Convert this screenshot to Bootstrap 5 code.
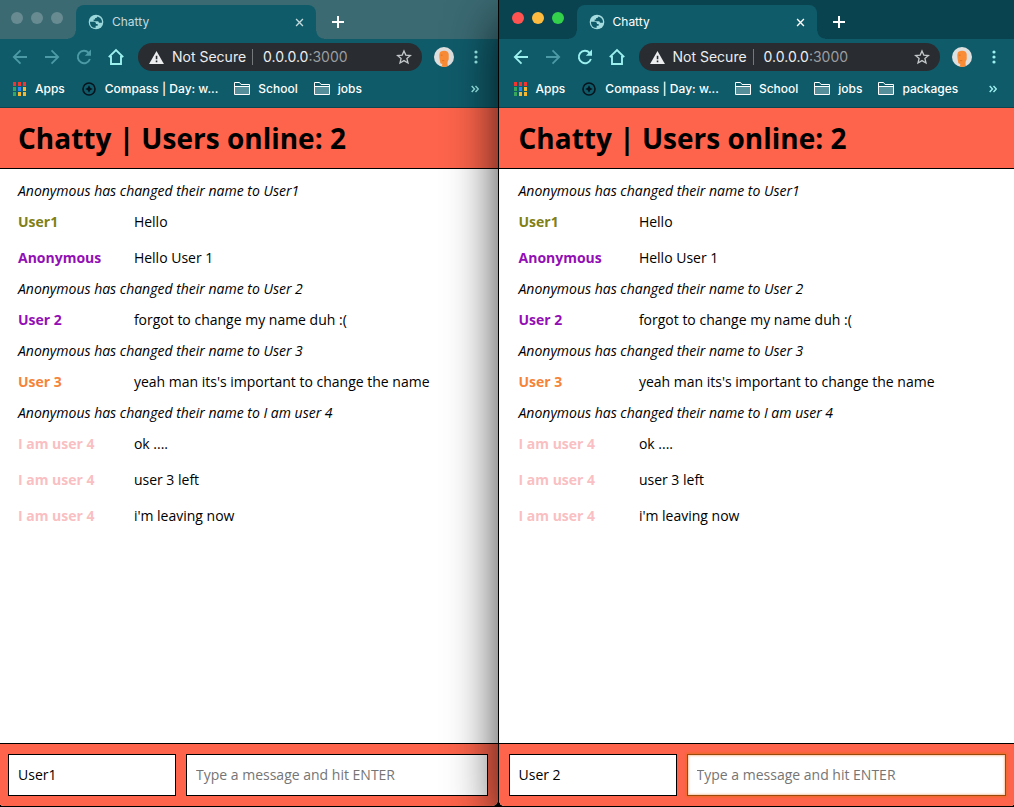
<!DOCTYPE html>
<html lang="en">
<head>
<meta charset="utf-8">
<meta name="viewport" content="width=device-width, initial-scale=1">
<title>Chatty</title>
<link href="https://cdn.jsdelivr.net/npm/bootstrap@5.3.0/dist/css/bootstrap.min.css" rel="stylesheet">
<style>
  body { background: #000; font-family: "Open Sans", sans-serif; font-size: 14px; line-height: 20px; color: #000; overflow: hidden; }
  .desktop { height: 100vh; margin: 0 -2px; padding-bottom: 1px; }

  /* browser window */
  .window { min-width: 0; overflow: hidden; border-radius: 0 0 6px 6px; }
  .window-back { flex: 500 1 0; --strip: #3b6a73; --nav-icon: #4b9aa5; --tab-text: #c3dadd; --tab-icon: #9ad7da; }
  .window-front { flex: 518 1 0; border-left: 1px solid #000; position: relative; z-index: 1; box-shadow: 0 20px 50px rgba(0,0,0,.75);
    --strip: #09434f; --nav-icon: #9cf0ee; --tab-text: #fff; --tab-icon: #a5dcdf; }
  .chrome { background: #105b6a; color: #fff; font-family: Inter, sans-serif; font-size: 12px; line-height: 16px; border-bottom: 1px solid #0c4450; }
  .chrome button { background: none; border: 0; padding: 0; color: inherit; }
  .chrome svg { display: block; flex: none; }

  .tab-strip { background: var(--strip); height: 39px; padding-left: 13px; }
  .lights { width: 65px; height: 36px; gap: 8px; }
  .light { width: 12px; height: 12px; border-radius: 50%; background: #688b92; }
  .window-front .light-close { background: #ff5351; }
  .window-front .light-min { background: #fdbc40; }
  .window-front .light-max { background: #33d04b; }
  .tab-active { position: relative; width: 240px; height: 34px; background: #105b6a; border-radius: 8px 8px 0 0; padding: 0 8px 0 12px; color: var(--tab-text); }
  .tab-active::before, .tab-active::after { content: ""; position: absolute; bottom: 0; width: 8px; height: 8px; }
  .tab-active::before { right: 100%; background: radial-gradient(circle at 0 0, transparent 7px, #105b6a 8px); }
  .tab-active::after { left: 100%; background: radial-gradient(circle at 100% 0, transparent 7px, #105b6a 8px); }
  .globe { color: var(--tab-icon); }
  .new-tab { width: 24px; margin: 4px 0 0 10px; }

  .toolbar { height: 36px; padding: 0 6px; }
  .chrome .nav-btn { width: 32px; height: 32px; color: var(--nav-icon); }
  .chrome .nav-dim { color: #4b9aa5; }
  .chrome .nav-home, .chrome .nav-mint { color: #9cf0ee; }
  .omnibox { height: 28px; margin: 0 12px 0 6px; padding: 0 10px 0 11px; border-radius: 14px; background: #292c30; color: #eceef0; font-size: 14px; line-height: 20px; }
  .omni-rule { width: 1px; height: 16px; background: #76797c; margin: 0 10px 0 6px; }
  .omnibox .star { color: #c5c8ca; }
  .port { color: #9b9ea1; }
  .avatar-btn { margin-right: 6px; }

  .bookmarks { height: 32px; padding: 0 19px 4px 13px; gap: 16px; font-weight: 500; }
  .bookmarks a { color: #fff; text-decoration: none; gap: 8px; white-space: nowrap; }

  /* chat page */
  .chat { background: #fff; }
  .chat-head { background: #fd644b; border-bottom: 1px solid #000; padding: 10px 20px; }
  .chat-head h1 { font-size: 28px; line-height: 40px; font-weight: 700; }
  .feed { padding: 9px 16px 0 20px; }
  .notice { line-height: 20px; padding: 3px 0; font-style: italic; }
  .message { line-height: 20px; padding: 8px 0; }
  .author { font-weight: 700; }
  .olive { color: #808015; }
  .violet { color: #930fb5; }
  .orange { color: #f58439; }
  .pink { color: #f9bfc2; }
  .chat-foot { background: #fd644b; border-top: 1px solid #000; padding: 10px; gap: 10px; }
  .field { height: 42px; padding: 0 9px 2px; border: 1px solid #000; border-radius: 0; background: #fff; color: #000; font-size: 14px; min-width: 0; outline: 0; }
  .field::placeholder { color: #757575; opacity: 1; }
  .field-name { width: 168px; flex: none; }
  .field-active { border-color: #974a0c; box-shadow: 0 0 2px 1px #ec6a25, inset 0 0 2px 1px #f8c9ac; }
</style>
</head>
<body>

<svg class="d-none" xmlns="http://www.w3.org/2000/svg">
  <symbol id="i-globe" viewBox="0 0 24 24"><circle cx="12" cy="12" r="11" fill="currentColor"/><path fill="#105b6a" d="M3 11.500h5.500c2.200 0 3.500 1.200 3.500 3.500h2.500v2.500h-3v3.300C6 21 2.800 17 3 11.500zM14 3.600c-.2 1.800-1.300 2.300-3.300 2.300v2.400H8.500v2.400h5.700c1.500 0 2.200 1 2.200 2.400h4.500c.8-4.300-2.200-8.300-6.900-9.500z"/></symbol>
  <symbol id="i-close" viewBox="0 0 10 10"><path d="M1.200 1.200l7.600 7.600M8.800 1.200L1.200 8.800" stroke="currentColor" stroke-width="1.500" fill="none"/></symbol>
  <symbol id="i-plus" viewBox="0 0 12 12"><path d="M6 0v12M0 6h12" stroke="currentColor" stroke-width="2" fill="none"/></symbol>
  <symbol id="i-back" viewBox="0 0 16 16"><path d="M15 8H2M8.500 1.300L1.800 8l6.700 6.700" stroke="currentColor" stroke-width="1.800" fill="none"/></symbol>
  <symbol id="i-forward" viewBox="0 0 16 16"><path d="M1 8h13M7.500 1.300L14.200 8l-6.700 6.700" stroke="currentColor" stroke-width="1.800" fill="none"/></symbol>
  <symbol id="i-reload" viewBox="0 0 16 16"><path d="M13.900 10A6.200 6.200 0 1 1 12.600 3.800" stroke="currentColor" stroke-width="1.900" fill="none"/><path d="M15 .6v6.200H8.800z" fill="currentColor"/></symbol>
  <symbol id="i-home" viewBox="0 0 18 18"><path d="M1.800 9.200L9 2l7.200 7.200M4 8v8h10V8" stroke="currentColor" stroke-width="1.900" fill="none"/></symbol>
  <symbol id="i-warn" viewBox="0 0 16 14"><path d="M8 0l8 14H0z" fill="currentColor"/><path d="M7.200 5h1.700v4H7.200zM7.200 10.300h1.700V12H7.200z" fill="#292c30"/></symbol>
  <symbol id="i-star" viewBox="0 0 16 16"><path d="M8 1.900l1.800 4.200 4.600.4-3.500 3 1.100 4.500L8 11.600 4 14l1.100-4.500-3.500-3 4.600-.4z" stroke="currentColor" stroke-width="1.300" fill="none"/></symbol>
  <symbol id="i-avatar" viewBox="0 0 20 20"><circle cx="10" cy="10" r="10" fill="#dedfdf"/><path fill="#f98c35" d="M5.500 7c0-2.200 2-3.200 4.800-3.200 2.700 0 4.400 1.400 4.400 3.700v4.300c0 1.500-.9 2.200-1.100 3.200-.2 1.300 0 3 .3 4.100a10 10 0 0 1-6.700.5c.8-.8 1.300-2 .9-2.900-1.300.1-2-.4-1.900-1.700C5.800 13 5 9.300 5.500 7z"/><path d="M6.800 8.200h1.800M8 13.600h2.200" stroke="#d96f22" stroke-width=".8"/></symbol>
  <symbol id="i-dots" viewBox="0 0 4 14"><g fill="currentColor"><circle cx="2" cy="2" r="1.600"/><circle cx="2" cy="7" r="1.600"/><circle cx="2" cy="12" r="1.600"/></g></symbol>
  <symbol id="i-apps" viewBox="0 0 16 16"><path fill="#f4342f" d="M2 1h3v4H2zM7 1h3v4H7zM12 1h3v4h-3z"/><path fill="#36a65d" d="M2 6h3v4H2zM2 11h3v4H2z"/><path fill="#2f87f2" d="M7 6h3v4H7z"/><path fill="#f5b82e" d="M12 6h3v4h-3zM7 11h3v4H7zM12 11h3v4h-3z"/></symbol>
  <symbol id="i-compass" viewBox="0 0 16 16"><circle cx="8" cy="8" r="6" fill="none" stroke="#06151d" stroke-width="1.600"/><path d="M8 4.300l1.300 2.400L11.700 8 9.300 9.300 8 11.700 6.700 9.300 4.300 8l2.400-1.300z" fill="#06151d"/></symbol>
  <symbol id="i-folder" viewBox="0 0 16 16"><path d="M.5 13.500v-12h5l1.500 2h8.500v10z" fill="#105b6a" stroke="#fff"/><path d="M1 6h14v7H1z" fill="#568f99"/><path d="M.5 5.500h15" stroke="#fff"/></symbol>
  <symbol id="i-more" viewBox="0 0 8 8"><path d="M.7 1L3.500 4 .7 7M4.500 1l2.800 3-2.800 3" stroke="currentColor" stroke-width="1.400" fill="none"/></symbol>
</svg>

<main class="desktop d-flex">

  <section class="window window-back d-flex flex-column" aria-label="User1 window">
    <div class="chrome">
      <div class="tab-strip d-flex">
        <div class="lights d-flex align-items-center flex-shrink-0"><span class="light light-close"></span><span class="light light-min"></span><span class="light light-max"></span></div>
        <div class="tab-active d-flex align-items-center align-self-end">
          <svg class="globe" width="16" height="16"><use href="#i-globe"/></svg>
          <span class="flex-grow-1 ps-2">Chatty</span>
          <button type="button" aria-label="Close tab" class="px-1"><svg width="9" height="9"><use href="#i-close"/></svg></button>
        </div>
        <button type="button" class="new-tab d-flex align-items-center justify-content-center" aria-label="New tab"><svg width="12" height="12"><use href="#i-plus"/></svg></button>
      </div>
      <div class="toolbar d-flex align-items-center">
        <button type="button" class="nav-btn d-flex align-items-center justify-content-center" aria-label="Back"><svg width="16" height="16"><use href="#i-back"/></svg></button>
        <button type="button" class="nav-btn nav-dim d-flex align-items-center justify-content-center" aria-label="Forward"><svg width="16" height="16"><use href="#i-forward"/></svg></button>
        <button type="button" class="nav-btn d-flex align-items-center justify-content-center" aria-label="Reload"><svg width="16" height="16"><use href="#i-reload"/></svg></button>
        <button type="button" class="nav-btn nav-home d-flex align-items-center justify-content-center" aria-label="Home"><svg width="18" height="18"><use href="#i-home"/></svg></button>
        <div class="omnibox d-flex align-items-center flex-grow-1">
          <svg width="15" height="13"><use href="#i-warn"/></svg>
          <span class="ps-2 text-nowrap">Not Secure</span>
          <span class="omni-rule"></span>
          <span>0.0.0.0<span class="port">:3000</span></span>
          <button type="button" class="star ms-auto" aria-label="Bookmark this page"><svg width="16" height="16"><use href="#i-star"/></svg></button>
        </div>
        <button type="button" class="avatar-btn" aria-label="Profile"><svg width="20" height="20"><use href="#i-avatar"/></svg></button>
        <button type="button" class="nav-btn nav-mint d-flex align-items-center justify-content-center" aria-label="Menu"><svg width="4" height="14"><use href="#i-dots"/></svg></button>
      </div>
      <nav class="bookmarks d-flex align-items-center" aria-label="Bookmarks">
        <a href="#" class="d-flex align-items-center"><svg width="16" height="16"><use href="#i-apps"/></svg>Apps</a>
        <a href="#" class="d-flex align-items-center"><svg width="16" height="16"><use href="#i-compass"/></svg>Compass | Day: w...</a>
        <a href="#" class="d-flex align-items-center"><svg width="16" height="16"><use href="#i-folder"/></svg>School</a>
        <a href="#" class="d-flex align-items-center"><svg width="16" height="16"><use href="#i-folder"/></svg>jobs</a>
        <button type="button" class="nav-mint ms-auto" aria-label="More bookmarks"><svg width="8" height="8"><use href="#i-more"/></svg></button>
      </nav>
    </div>
    <div class="chat d-flex flex-column flex-grow-1">
      <header class="chat-head"><h1 class="m-0">Chatty | Users online: 2</h1></header>
      <div class="feed flex-grow-1">
        <div class="notice">Anonymous has changed their name to User1</div>
        <div class="message row gx-0"><div class="author olive col-3">User1</div><div class="col-9">Hello</div></div>
        <div class="message row gx-0"><div class="author violet col-3">Anonymous</div><div class="col-9">Hello User 1</div></div>
        <div class="notice">Anonymous has changed their name to User 2</div>
        <div class="message row gx-0"><div class="author violet col-3">User 2</div><div class="col-9">forgot to change my name duh :(</div></div>
        <div class="notice">Anonymous has changed their name to User 3</div>
        <div class="message row gx-0"><div class="author orange col-3">User 3</div><div class="col-9">yeah man its's important to change the name</div></div>
        <div class="notice">Anonymous has changed their name to I am user 4</div>
        <div class="message row gx-0"><div class="author pink col-3">I am user 4</div><div class="col-9">ok ....</div></div>
        <div class="message row gx-0"><div class="author pink col-3">I am user 4</div><div class="col-9">user 3 left</div></div>
        <div class="message row gx-0"><div class="author pink col-3">I am user 4</div><div class="col-9">i'm leaving now</div></div>
      </div>
      <form class="chat-foot d-flex">
        <input class="field field-name" type="text" value="User1" aria-label="Your name">
        <input class="field flex-grow-1" type="text" placeholder="Type a message and hit ENTER" aria-label="Message">
      </form>
    </div>
  </section>

  <section class="window window-front d-flex flex-column" aria-label="User 2 window">
    <div class="chrome">
      <div class="tab-strip d-flex">
        <div class="lights d-flex align-items-center flex-shrink-0"><span class="light light-close"></span><span class="light light-min"></span><span class="light light-max"></span></div>
        <div class="tab-active d-flex align-items-center align-self-end">
          <svg class="globe" width="16" height="16"><use href="#i-globe"/></svg>
          <span class="flex-grow-1 ps-2">Chatty</span>
          <button type="button" aria-label="Close tab" class="px-1"><svg width="9" height="9"><use href="#i-close"/></svg></button>
        </div>
        <button type="button" class="new-tab d-flex align-items-center justify-content-center" aria-label="New tab"><svg width="12" height="12"><use href="#i-plus"/></svg></button>
      </div>
      <div class="toolbar d-flex align-items-center">
        <button type="button" class="nav-btn d-flex align-items-center justify-content-center" aria-label="Back"><svg width="16" height="16"><use href="#i-back"/></svg></button>
        <button type="button" class="nav-btn nav-dim d-flex align-items-center justify-content-center" aria-label="Forward"><svg width="16" height="16"><use href="#i-forward"/></svg></button>
        <button type="button" class="nav-btn d-flex align-items-center justify-content-center" aria-label="Reload"><svg width="16" height="16"><use href="#i-reload"/></svg></button>
        <button type="button" class="nav-btn nav-home d-flex align-items-center justify-content-center" aria-label="Home"><svg width="18" height="18"><use href="#i-home"/></svg></button>
        <div class="omnibox d-flex align-items-center flex-grow-1">
          <svg width="15" height="13"><use href="#i-warn"/></svg>
          <span class="ps-2 text-nowrap">Not Secure</span>
          <span class="omni-rule"></span>
          <span>0.0.0.0<span class="port">:3000</span></span>
          <button type="button" class="star ms-auto" aria-label="Bookmark this page"><svg width="16" height="16"><use href="#i-star"/></svg></button>
        </div>
        <button type="button" class="avatar-btn" aria-label="Profile"><svg width="20" height="20"><use href="#i-avatar"/></svg></button>
        <button type="button" class="nav-btn nav-mint d-flex align-items-center justify-content-center" aria-label="Menu"><svg width="4" height="14"><use href="#i-dots"/></svg></button>
      </div>
      <nav class="bookmarks d-flex align-items-center" aria-label="Bookmarks">
        <a href="#" class="d-flex align-items-center"><svg width="16" height="16"><use href="#i-apps"/></svg>Apps</a>
        <a href="#" class="d-flex align-items-center"><svg width="16" height="16"><use href="#i-compass"/></svg>Compass | Day: w...</a>
        <a href="#" class="d-flex align-items-center"><svg width="16" height="16"><use href="#i-folder"/></svg>School</a>
        <a href="#" class="d-flex align-items-center"><svg width="16" height="16"><use href="#i-folder"/></svg>jobs</a>
        <a href="#" class="d-flex align-items-center"><svg width="16" height="16"><use href="#i-folder"/></svg>packages</a>
        <button type="button" class="nav-mint ms-auto" aria-label="More bookmarks"><svg width="8" height="8"><use href="#i-more"/></svg></button>
      </nav>
    </div>
    <div class="chat d-flex flex-column flex-grow-1">
      <header class="chat-head"><h1 class="m-0">Chatty | Users online: 2</h1></header>
      <div class="feed flex-grow-1">
        <div class="notice">Anonymous has changed their name to User1</div>
        <div class="message row gx-0"><div class="author olive col-3">User1</div><div class="col-9">Hello</div></div>
        <div class="message row gx-0"><div class="author violet col-3">Anonymous</div><div class="col-9">Hello User 1</div></div>
        <div class="notice">Anonymous has changed their name to User 2</div>
        <div class="message row gx-0"><div class="author violet col-3">User 2</div><div class="col-9">forgot to change my name duh :(</div></div>
        <div class="notice">Anonymous has changed their name to User 3</div>
        <div class="message row gx-0"><div class="author orange col-3">User 3</div><div class="col-9">yeah man its's important to change the name</div></div>
        <div class="notice">Anonymous has changed their name to I am user 4</div>
        <div class="message row gx-0"><div class="author pink col-3">I am user 4</div><div class="col-9">ok ....</div></div>
        <div class="message row gx-0"><div class="author pink col-3">I am user 4</div><div class="col-9">user 3 left</div></div>
        <div class="message row gx-0"><div class="author pink col-3">I am user 4</div><div class="col-9">i'm leaving now</div></div>
      </div>
      <form class="chat-foot d-flex">
        <input class="field field-name" type="text" value="User 2" aria-label="Your name">
        <input class="field field-active flex-grow-1" type="text" placeholder="Type a message and hit ENTER" aria-label="Message">
      </form>
    </div>
  </section>

</main>
<script src="https://cdn.jsdelivr.net/npm/bootstrap@5.3.0/dist/js/bootstrap.bundle.min.js"></script>
</body>
</html>
